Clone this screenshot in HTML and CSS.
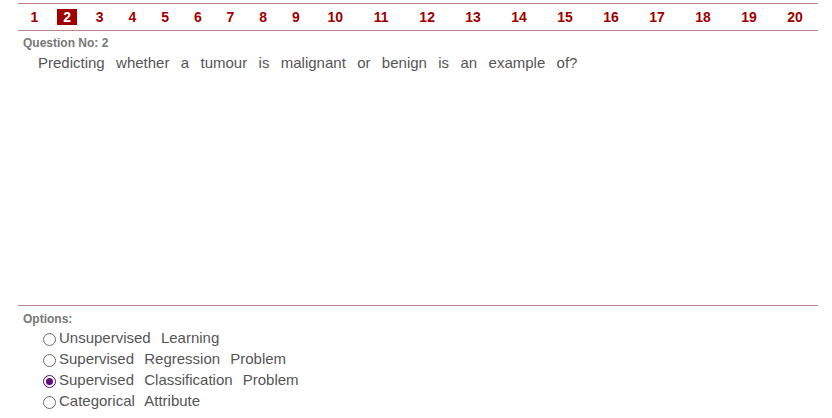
FILE: index.html
```html
<!DOCTYPE html>
<html>
<head>
<meta charset="utf-8">
<link rel="stylesheet" href="styles.css">
</head>
<body>
<div class="page">
  <div class="nav">
    <span class="num">1</span>
    <span class="num"><span class="current">2</span></span>
    <span class="num">3</span>
    <span class="num">4</span>
    <span class="num">5</span>
    <span class="num">6</span>
    <span class="num">7</span>
    <span class="num">8</span>
    <span class="num">9</span>
    <span class="num">10</span>
    <span class="num">11</span>
    <span class="num">12</span>
    <span class="num">13</span>
    <span class="num">14</span>
    <span class="num">15</span>
    <span class="num">16</span>
    <span class="num">17</span>
    <span class="num">18</span>
    <span class="num">19</span>
    <span class="num">20</span>
  </div>
  <div class="question">
    <div class="label">Question No: 2</div>
    <p class="qtext">Predicting whether a tumour is malignant or benign is an example of?</p>
  </div>
  <div class="options">
    <div class="label">Options:</div>
    <ul class="opt-list">
      <li class="opt"><span class="radio"></span><span class="opt-text">Unsupervised Learning</span></li>
      <li class="opt"><span class="radio"></span><span class="opt-text">Supervised Regression Problem</span></li>
      <li class="opt"><span class="radio checked"></span><span class="opt-text">Supervised Classification Problem</span></li>
      <li class="opt"><span class="radio"></span><span class="opt-text">Categorical Attribute</span></li>
    </ul>
  </div>
</div>
</body>
</html>
```
FILE: styles.css
```css
html, body {
  margin: 0;
  padding: 0;
  background: #fff;
}
body {
  font-family: "Liberation Sans", Arial, sans-serif;
}
.page {
  width: 800px;
  margin: 3px 0 0 18px;
}
.nav {
  display: grid;
  grid-template-columns: repeat(9, 32.7fr) repeat(11, 46fr);
  align-items: center;
  height: 26px;
  border-top: 1px solid #b98585;
  border-bottom: 1px solid #b98585;
}
.num {
  text-align: center;
  font-size: 14px;
  font-weight: bold;
  color: #a00000;
  line-height: 16px;
}
.current {
  display: inline-block;
  background: #a00000;
  color: #fff;
  padding: 0 6px;
  line-height: 16px;
}
.label {
  font-size: 12px;
  font-weight: bold;
  color: #777;
  margin-left: 5px;
}
.question {
  height: 274px;
  padding-top: 5px;
  box-sizing: border-box;
}
.qtext {
  margin: 4px 0 0 20px;
  font-size: 15px;
  color: #555;
  word-spacing: 7.2px;
}
.options {
  border-top: 1px solid #b98585;
  padding-top: 6px;
}
.opt-list {
  list-style: none;
  margin: 1px 0 0 25px;
  padding: 0;
}
.opt {
  display: flex;
  align-items: center;
  height: 21px;
  font-size: 15px;
  color: #555;
  word-spacing: 6px;
}
.radio {
  width: 11px;
  height: 11px;
  border: 1px solid #6b6b6b;
  border-radius: 50%;
  margin: 3px 3px 0 0;
  box-sizing: content-box;
  position: relative;
}
.radio.checked {
  border-color: #5a0a78;
}
.radio.checked::after {
  content: "";
  position: absolute;
  left: 2px;
  top: 2px;
  width: 7px;
  height: 7px;
  border-radius: 50%;
  background: #5e0a80;
}
```
